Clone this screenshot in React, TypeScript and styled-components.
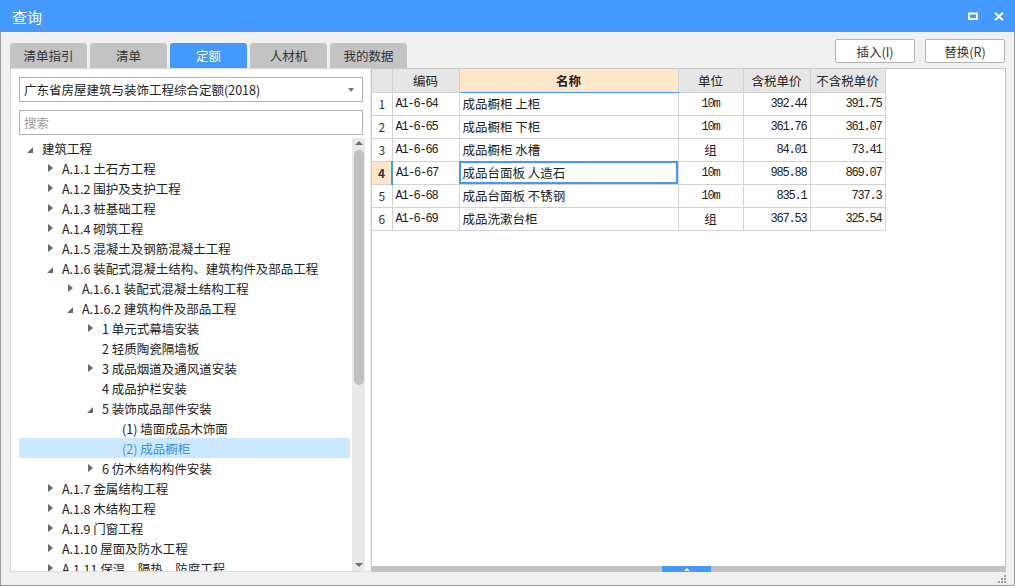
import * as React from 'react';
import styled, { createGlobalStyle, css } from 'styled-components';

const GlobalStyle = createGlobalStyle`
  html, body {
    margin: 0;
    padding: 0;
    background: #ffffff;
  }
  body {
    font-family: "Noto Sans CJK SC", "Noto Sans", sans-serif;
    font-size: 12px;
    color: #222;
  }
  * { box-sizing: border-box; }
`;

const BLUE = '#4499ff';

const Window = styled.div`
  width: 1015px;
  height: 586px;
  border: 1px solid #9a9a9a;
  border-top: none;
  background: #f0f0f0;
  display: flex;
  flex-direction: column;
  position: relative;
`;

const TitleBar = styled.div`
  height: 32px;
  background: ${BLUE};
  display: flex;
  align-items: center;
  padding: 0 3px 0 12px;
  color: #fff;
  font-size: 15px;
  margin: 0 -1px;
`;

const Title = styled.div`
  flex: 1;
`;

const TitleButton = styled.div`
  width: 26px;
  height: 20px;
  display: flex;
  align-items: center;
  justify-content: center;
`;

const Body = styled.div`
  flex: 1;
  display: flex;
  flex-direction: column;
  padding: 0 8px 0 9px;
`;

const TopRow = styled.div`
  height: 36px;
  display: flex;
  justify-content: space-between;
`;

const Tabs = styled.div`
  display: flex;
  align-items: flex-end;
  gap: 3px;
`;

const Tab = styled.div<{ $active?: boolean }>`
  width: 77px;
  height: 25px;
  border-radius: 3px 3px 0 0;
  background: ${(p) => (p.$active ? BLUE : '#c3c3c3')};
  color: ${(p) => (p.$active ? '#fff' : '#333')};
  display: flex;
  align-items: center;
  justify-content: center;
  font-size: 12.5px;
`;

const Actions = styled.div`
  display: flex;
  gap: 10px;
  padding-top: 7px;
  padding-right: 1px;
`;

const ActionButton = styled.div`
  width: 80px;
  height: 24px;
  background: #fff;
  border: 1px solid #b4b4b4;
  border-radius: 2px;
  display: flex;
  align-items: center;
  justify-content: center;
  font-size: 12.5px;
  color: #333;
`;

const Panels = styled.div`
  height: 504px;
  display: flex;
`;

const LeftPanel = styled.div`
  width: 360px;
  background: #fff;
  border: 1px solid #dadada;
  border-right: none;
  display: flex;
  flex-direction: column;
  padding: 8px 0 0 8px;
`;

const Field = styled.div`
  width: 344px;
  height: 25px;
  border: 1px solid #b0b0b0;
  display: flex;
  align-items: center;
  padding: 0 8px 0 4px;
  font-size: 12.5px;
  & + & {
    margin-top: 8px;
  }
`;

const FieldText = styled.span<{ $placeholder?: boolean }>`
  flex: 1;
  color: ${(p) => (p.$placeholder ? '#9a9a9a' : '#222')};
  white-space: nowrap;
`;

const Caret = styled.span`
  width: 0;
  height: 0;
  border-left: 3.5px solid transparent;
  border-right: 3.5px solid transparent;
  border-top: 4px solid #777;
`;

const TreeArea = styled.div`
  flex: 1;
  display: flex;
  margin-top: 3px;
  min-height: 0;
`;

const TreeList = styled.div`
  width: 331px;
  overflow: hidden;
`;

const Row = styled.div<{ $level: number; $selected?: boolean }>`
  height: 20px;
  display: flex;
  align-items: center;
  padding-left: ${(p) => 5 + p.$level * 20}px;
  white-space: nowrap;
  font-size: 12.5px;
  color: #222;
  ${(p) =>
    p.$selected &&
    css`
      background: #cce8ff;
      color: #3f8fe6;
    `}
`;

const Toggle = styled.span`
  width: 12px;
  height: 12px;
  margin-right: 6px;
  display: flex;
  align-items: center;
  justify-content: center;
  flex-shrink: 0;
`;

const Collapsed = styled.span`
  width: 0;
  height: 0;
  border-top: 4px solid transparent;
  border-bottom: 4px solid transparent;
  border-left: 5px solid #6a6a6a;
  margin-left: 1px;
`;

const Expanded = styled.span`
  width: 0;
  height: 0;
  border-left: 6px solid transparent;
  border-bottom: 6px solid #6a6a6a;
  margin-top: 3px;
`;

const VScroll = styled.div`
  width: 13px;
  margin-left: 2px;
  background: #e8e8e8;
  display: flex;
  flex-direction: column;
  align-items: center;
  padding-top: 3px;
`;

const ArrowUp = styled.span`
  width: 0;
  height: 0;
  border-left: 4px solid transparent;
  border-right: 4px solid transparent;
  border-bottom: 4px solid #6c6c6c;
`;

const ArrowDown = styled.span`
  width: 0;
  height: 0;
  border-left: 4px solid transparent;
  border-right: 4px solid transparent;
  border-top: 4px solid #6c6c6c;
  margin-bottom: 4px;
`;

const Thumb = styled.div`
  width: 10px;
  height: 235px;
  margin-top: 5px;
  border-radius: 5px;
  background: #c1c1c1;
`;

const Spacer = styled.div`
  flex: 1;
`;

const RightPane = styled.div`
  flex: 1;
  background: #fff;
  border: 1px solid #c4c4c4;
  border-bottom: none;
  display: flex;
  flex-direction: column;
  margin-left: 1px;
`;

const GridWrap = styled.div`
  flex: 1;
`;

const Grid = styled.table`
  border-collapse: collapse;
  table-layout: fixed;
  font-size: 12.5px;
  td, th {
    border: 1px solid #d2d2d2;
    height: 23px;
    padding: 0 3px;
    white-space: nowrap;
    overflow: hidden;
  }
  tr:first-child th {
    border-top: none;
  }
  tr td:first-child, tr th:first-child {
    border-left: none;
  }
`;

const HeadCell = styled.th<{ $focus?: boolean }>`
  background: ${(p) => (p.$focus ? '#fde6c9' : '#e6e6e6')};
  font-weight: ${(p) => (p.$focus ? 700 : 400)};
  color: #222;
  text-align: center;
  ${(p) =>
    p.$focus &&
    css`
      border-bottom: 1px solid ${BLUE} !important;
    `}
`;

const NumCell = styled.td<{ $current?: boolean }>`
  text-align: center;
  color: #333;
  font-size: 12px;
  background: ${(p) => (p.$current ? '#fde6c9' : '#fff')};
  font-weight: ${(p) => (p.$current ? 700 : 400)};
  ${(p) =>
    p.$current &&
    css`
      border-right: 2px solid ${BLUE} !important;
    `}
`;

const MonoCell = styled.td<{ $align?: 'left' | 'center' | 'right' }>`
  font-family: "Liberation Mono", "DejaVu Sans Mono", monospace;
  font-size: 12px;
  letter-spacing: -1.2px;
  text-align: ${(p) => p.$align || 'left'};
  color: #222;
`;

const TextCell = styled.td<{ $align?: 'left' | 'center'; $focus?: boolean }>`
  text-align: ${(p) => p.$align || 'left'};
  color: #222;
  ${(p) =>
    p.$focus &&
    css`
      outline: 2px solid ${BLUE};
      outline-offset: -2px;
    `}
`;

const BottomBar = styled.div`
  height: 6px;
  background: #c2c2c2;
  display: flex;
  justify-content: center;
`;

const Handle = styled.div`
  width: 49px;
  margin-left: -4px;
  background: ${BLUE};
  display: flex;
  align-items: center;
  justify-content: center;
`;

const HandleArrow = styled.span`
  width: 0;
  height: 0;
  border-left: 3px solid transparent;
  border-right: 3px solid transparent;
  border-bottom: 3px solid #fff;
`;

const Footer = styled.div`
  flex: 1;
  display: flex;
  justify-content: flex-end;
  align-items: flex-end;
  padding: 0 0 2px;
`;

const Grip = styled.div`
  display: grid;
  grid-template-columns: repeat(3, 2px);
  grid-template-rows: repeat(3, 2px);
  gap: 1px;
`;

const GripDot = styled.span<{ $on: boolean }>`
  background: ${(p) => (p.$on ? '#999' : 'transparent')};
`;

type Node = { label: string; level: number; state: 'open' | 'closed' | 'leaf'; selected?: boolean };

const tree: Node[] = [
  { label: '建筑工程', level: 0, state: 'open' },
  { label: 'A.1.1 土石方工程', level: 1, state: 'closed' },
  { label: 'A.1.2 围护及支护工程', level: 1, state: 'closed' },
  { label: 'A.1.3 桩基础工程', level: 1, state: 'closed' },
  { label: 'A.1.4 砌筑工程', level: 1, state: 'closed' },
  { label: 'A.1.5 混凝土及钢筋混凝土工程', level: 1, state: 'closed' },
  { label: 'A.1.6 装配式混凝土结构、建筑构件及部品工程', level: 1, state: 'open' },
  { label: 'A.1.6.1 装配式混凝土结构工程', level: 2, state: 'closed' },
  { label: 'A.1.6.2 建筑构件及部品工程', level: 2, state: 'open' },
  { label: '1 单元式幕墙安装', level: 3, state: 'closed' },
  { label: '2 轻质陶瓷隔墙板', level: 3, state: 'leaf' },
  { label: '3 成品烟道及通风道安装', level: 3, state: 'closed' },
  { label: '4 成品护栏安装', level: 3, state: 'leaf' },
  { label: '5 装饰成品部件安装', level: 3, state: 'open' },
  { label: '(1) 墙面成品木饰面', level: 4, state: 'leaf' },
  { label: '(2) 成品橱柜', level: 4, state: 'leaf', selected: true },
  { label: '6 仿木结构构件安装', level: 3, state: 'closed' },
  { label: 'A.1.7 金属结构工程', level: 1, state: 'closed' },
  { label: 'A.1.8 木结构工程', level: 1, state: 'closed' },
  { label: 'A.1.9 门窗工程', level: 1, state: 'closed' },
  { label: 'A.1.10 屋面及防水工程', level: 1, state: 'closed' },
  { label: 'A.1.11 保温、隔热、防腐工程', level: 1, state: 'closed' },
];

const rows = [
  ['A1-6-64', '成品橱柜 上柜', '10m', '392.44', '391.75'],
  ['A1-6-65', '成品橱柜 下柜', '10m', '361.76', '361.07'],
  ['A1-6-66', '成品橱柜 水槽', '组', '84.01', '73.41'],
  ['A1-6-67', '成品台面板 人造石', '10m', '985.88', '869.07'],
  ['A1-6-68', '成品台面板 不锈钢', '10m', '835.1', '737.3'],
  ['A1-6-69', '成品洗漱台柜', '组', '367.53', '325.54'],
];

const widths = [20, 67, 219, 65, 67, 75];

export default function App() {
  const current = 3;
  return (
    <>
      <GlobalStyle />
      <Window>
        <TitleBar>
          <Title>查询</Title>
          <TitleButton>
            <svg width="10" height="8" viewBox="0 0 10 8">
              <rect x="1" y="1.5" width="8" height="5.5" fill="none" stroke="#fff" strokeWidth="2" />
            </svg>
          </TitleButton>
          <TitleButton>
            <svg width="10" height="9" viewBox="0 0 10 9">
              <path d="M1 0.8 L9 8.2 M9 0.8 L1 8.2" stroke="#fff" strokeWidth="2" />
            </svg>
          </TitleButton>
        </TitleBar>
        <Body>
          <TopRow>
            <Tabs>
              <Tab>清单指引</Tab>
              <Tab>清单</Tab>
              <Tab $active>定额</Tab>
              <Tab>人材机</Tab>
              <Tab>我的数据</Tab>
            </Tabs>
            <Actions>
              <ActionButton>插入(I)</ActionButton>
              <ActionButton>替换(R)</ActionButton>
            </Actions>
          </TopRow>
          <Panels>
            <LeftPanel>
              <Field>
                <FieldText>广东省房屋建筑与装饰工程综合定额(2018)</FieldText>
                <Caret />
              </Field>
              <Field>
                <FieldText $placeholder>搜索</FieldText>
              </Field>
              <TreeArea>
                <TreeList>
                  {tree.map((n) => (
                    <Row key={n.label} $level={n.level} $selected={n.selected}>
                      <Toggle>
                        {n.state === 'open' && <Expanded />}
                        {n.state === 'closed' && <Collapsed />}
                      </Toggle>
                      {n.label}
                    </Row>
                  ))}
                </TreeList>
                <VScroll>
                  <ArrowUp />
                  <Thumb />
                  <Spacer />
                  <ArrowDown />
                </VScroll>
              </TreeArea>
            </LeftPanel>
            <RightPane>
              <GridWrap>
                <Grid>
                  <colgroup>
                    {widths.map((w, i) => (
                      <col key={i} style={{ width: w }} />
                    ))}
                  </colgroup>
                  <thead>
                    <tr>
                      <HeadCell />
                      <HeadCell>编码</HeadCell>
                      <HeadCell $focus>名称</HeadCell>
                      <HeadCell>单位</HeadCell>
                      <HeadCell>含税单价</HeadCell>
                      <HeadCell>不含税单价</HeadCell>
                    </tr>
                  </thead>
                  <tbody>
                    {rows.map((r, i) => (
                      <tr key={r[0]}>
                        <NumCell $current={i === current}>{i + 1}</NumCell>
                        <MonoCell>{r[0]}</MonoCell>
                        <TextCell $focus={i === current}>{r[1]}</TextCell>
                        {r[2] === '组' ? (
                          <TextCell $align="center">{r[2]}</TextCell>
                        ) : (
                          <MonoCell $align="center">{r[2]}</MonoCell>
                        )}
                        <MonoCell $align="right">{r[3]}</MonoCell>
                        <MonoCell $align="right">{r[4]}</MonoCell>
                      </tr>
                    ))}
                  </tbody>
                </Grid>
              </GridWrap>
              <BottomBar>
                <Handle>
                  <HandleArrow />
                </Handle>
              </BottomBar>
            </RightPane>
          </Panels>
          <Footer>
            <Grip>
              {[0, 0, 1, 0, 1, 1, 1, 1, 1].map((on, i) => (
                <GripDot key={i} $on={on === 1} />
              ))}
            </Grip>
          </Footer>
        </Body>
      </Window>
    </>
  );
}
